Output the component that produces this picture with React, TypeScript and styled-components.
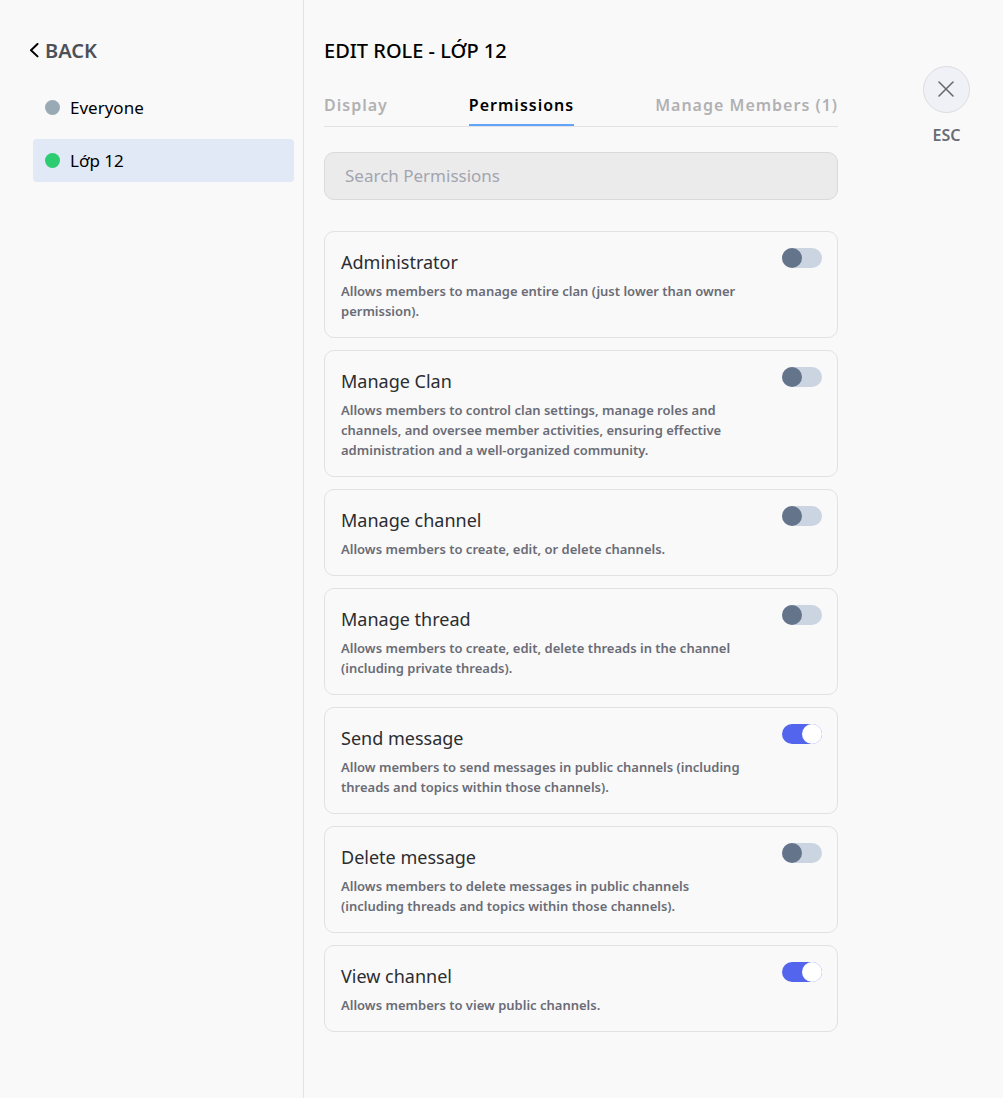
import React, { useState } from "react";
import styled, { createGlobalStyle } from "styled-components";

const GlobalStyle = createGlobalStyle`
  *, *::before, *::after { box-sizing: border-box; }
  body {
    margin: 0;
    background: #f9f9f9;
    color: #000;
    font-family: "Noto Sans", "Open Sans", sans-serif;
  }
  button, input { font: inherit; }
  h1, h2, p, ul { margin: 0; padding: 0; }
`;

const Page = styled.div`
  display: flex;
  min-height: 100vh;
`;

const Sidebar = styled.aside`
  flex: 0 0 304px;
  padding: 36px 9px 0 33px;
  border-right: 1px solid #e3e3e6;
`;

const BackButton = styled.button`
  display: flex;
  align-items: center;
  gap: 4px;
  height: 30px;
  margin-left: -4px;
  padding: 0;
  border: 0;
  background: none;
  color: #4e5058;
  font-size: 20px;
  font-weight: 600;
  line-height: 30px;
  cursor: pointer;
`;

const RoleList = styled.ul`
  display: flex;
  flex-direction: column;
  gap: 10px;
  margin-top: 20px;
  list-style: none;
`;

const RoleButton = styled.button<{ $active: boolean }>`
  display: flex;
  align-items: center;
  gap: 10px;
  width: 100%;
  height: 43px;
  padding: 0 12px;
  border: 0;
  border-radius: 4px;
  background: ${(p) => (p.$active ? "#e1e8f6" : "transparent")};
  color: #000;
  font-size: 17px;
  cursor: pointer;
`;

const Dot = styled.span<{ $color: string }>`
  width: 15px;
  height: 15px;
  border-radius: 50%;
  background: ${(p) => p.$color};
`;

const Main = styled.main`
  flex: 1;
  min-width: 0;
  padding: 36px 20px 64px;
`;

const Title = styled.h1`
  font-size: 20px;
  font-weight: 500;
  line-height: 30px;
  text-transform: uppercase;
`;

const Tabs = styled.div`
  display: flex;
  justify-content: space-between;
  margin-top: 20px;
  border-bottom: 1px solid #e3e3e6;
`;

const Tab = styled.button<{ $active: boolean }>`
  height: 40px;
  padding: 0;
  border: 0;
  border-bottom: 2px solid ${(p) => (p.$active ? "#60a5fa" : "transparent")};
  background: none;
  color: ${(p) => (p.$active ? "#000" : "#b1b1b3")};
  font-size: 16px;
  font-weight: 600;
  letter-spacing: 1px;
  cursor: pointer;
`;

const Search = styled.input`
  display: block;
  width: 100%;
  height: 48px;
  margin-top: 25px;
  padding: 0 20px 2px;
  border: 1px solid #d9dadd;
  border-radius: 10px;
  outline: none;
  background: #ebebeb;
  color: #313338;
  font-size: 17px;
  &::placeholder { color: #a3a5b0; opacity: 1; }
`;

const PermissionList = styled.ul`
  display: flex;
  flex-direction: column;
  gap: 12px;
  margin-top: 31px;
  list-style: none;
`;

const Card = styled.li`
  display: flex;
  justify-content: space-between;
  align-items: flex-start;
  gap: 32px;
  padding: 16px 15px 16px 16px;
  border: 1px solid #e1e1e3;
  border-radius: 10px;
`;

const CardText = styled.div`
  min-width: 0;
`;

const Name = styled.label`
  display: block;
  color: #2b2d31;
  font-size: 18px;
  line-height: 28px;
`;

const Description = styled.p`
  margin-top: 5px;
  color: #6a6c76;
  font-size: 13px;
  font-weight: 600;
  line-height: 20px;
`;

const Switch = styled.input`
  flex: none;
  appearance: none;
  width: 40px;
  height: 20px;
  margin: 0;
  border-radius: 10px;
  background: #cbd5e1;
  cursor: pointer;
  &::before {
    content: "";
    display: block;
    width: 20px;
    height: 20px;
    border-radius: 50%;
    background: #64748b;
  }
  &:checked { background: #5265ec; }
  &:checked::before { margin-left: 20px; background: #fff; }
`;

const CloseColumn = styled.div`
  display: flex;
  flex: 0 0 145px;
  flex-direction: column;
  align-items: flex-end;
  padding: 66px 33px 0 0;
`;

const CloseGroup = styled.div`
  display: flex;
  flex-direction: column;
  align-items: center;
  gap: 12px;
`;

const CloseButton = styled.button`
  display: grid;
  place-items: center;
  width: 47px;
  height: 47px;
  padding: 0;
  border: 1px solid #dcdce1;
  border-radius: 50%;
  background: #f0f1f6;
  color: #64656f;
  cursor: pointer;
`;

const KeyHint = styled.span`
  color: #6a6c76;
  font-size: 16px;
  font-weight: 600;
  line-height: 20px;
`;

const roles = [
  { name: "Everyone", color: "#99aab5" },
  { name: "Lớp 12", color: "#2ecc71" },
];

const tabs = ["Display", "Permissions", "Manage Members (1)"];

const permissions = [
  { id: "administrator", name: "Administrator", text: "Allows members to manage entire clan (just lower than owner permission).", on: false },
  { id: "manage-clan", name: "Manage Clan", text: "Allows members to control clan settings, manage roles and channels, and oversee member activities, ensuring effective administration and a well-organized community.", on: false },
  { id: "manage-channel", name: "Manage channel", text: "Allows members to create, edit, or delete channels.", on: false },
  { id: "manage-thread", name: "Manage thread", text: "Allows members to create, edit, delete threads in the channel (including private threads).", on: false },
  { id: "send-message", name: "Send message", text: "Allow members to send messages in public channels (including threads and topics within those channels).", on: true },
  { id: "delete-message", name: "Delete message", text: "Allows members to delete messages in public channels (including threads and topics within those channels).", on: false },
  { id: "view-channel", name: "View channel", text: "Allows members to view public channels.", on: true },
];

export default function App() {
  const [role, setRole] = useState("Lớp 12");
  const [tab, setTab] = useState("Permissions");
  const [query, setQuery] = useState("");
  const shown = permissions.filter((p) => p.name.toLowerCase().includes(query.toLowerCase()));

  return (
    <Page>
      <GlobalStyle />
      <Sidebar>
        <BackButton type="button">
          <svg width="12" height="16" viewBox="0 0 12 16" fill="none" stroke="#000" strokeWidth="2" strokeLinecap="round" strokeLinejoin="round" aria-hidden="true">
            <path d="M8.500 1 2 7.200 8.500 13.400" />
          </svg>
          BACK
        </BackButton>
        <RoleList>
          {roles.map((r) => (
            <li key={r.name}>
              <RoleButton type="button" $active={r.name === role} onClick={() => setRole(r.name)}>
                <Dot $color={r.color} />
                {r.name}
              </RoleButton>
            </li>
          ))}
        </RoleList>
      </Sidebar>
      <Main>
        <Title>Edit role - {role}</Title>
        <Tabs role="tablist">
          {tabs.map((t) => (
            <Tab key={t} type="button" role="tab" aria-selected={t === tab} $active={t === tab} onClick={() => setTab(t)}>
              {t}
            </Tab>
          ))}
        </Tabs>
        <Search
          type="text"
          aria-label="Search Permissions"
          placeholder="Search Permissions"
          value={query}
          onChange={(e) => setQuery(e.target.value)}
        />
        <PermissionList>
          {shown.map((p) => (
            <Card key={p.id}>
              <CardText>
                <Name htmlFor={p.id}>{p.name}</Name>
                <Description>{p.text}</Description>
              </CardText>
              <Switch id={p.id} type="checkbox" role="switch" defaultChecked={p.on} />
            </Card>
          ))}
        </PermissionList>
      </Main>
      <CloseColumn>
        <CloseGroup>
          <CloseButton type="button" aria-label="Close">
            <svg width="17" height="17" viewBox="0 0 17 17" fill="none" stroke="currentColor" strokeWidth="1.5" strokeLinecap="round" aria-hidden="true">
              <path d="M1 1 15 15M15 1 1 15" />
            </svg>
          </CloseButton>
          <KeyHint>ESC</KeyHint>
        </CloseGroup>
      </CloseColumn>
    </Page>
  );
}
